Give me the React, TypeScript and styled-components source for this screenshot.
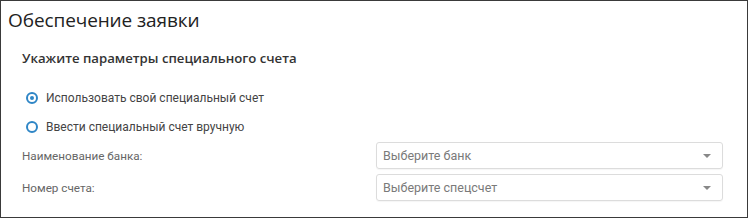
import React from "react";
import styled, { createGlobalStyle } from "styled-components";

const Global = createGlobalStyle`
  html, body { margin: 0; padding: 0; background: #fff; }
  body { font-family: "Open Sans", "Noto Sans", sans-serif; }
  * { box-sizing: border-box; }
`;

const Frame = styled.div`
  width: 748px;
  height: 218px;
  border: 1px solid #3a3a3a;
  background: #fff;
  overflow: hidden;
`;

const Title = styled.h1`
  margin: 0;
  padding: 6px 0 0 7px;
  font-size: 19px;
  line-height: 26px;
  font-weight: 500;
  color: #222;
  letter-spacing: -0.1px;
`;

const Body = styled.div`
  padding: 16px 0 0 21px;
  display: flex;
  flex-direction: column;
`;

const Subtitle = styled.h2`
  margin: 0 0 22px;
  font-size: 13.2px;
  line-height: 18px;
  font-weight: 600;
  color: #333;
`;

const RadioGroup = styled.div`
  display: flex;
  flex-direction: column;
  gap: 11px;
  padding-left: 4px;
  margin-bottom: 6px;
`;

const RadioRow = styled.label`
  display: flex;
  align-items: center;
  gap: 8px;
  font-family: Roboto, "Open Sans", sans-serif;
  font-size: 12px;
  line-height: 18px;
  color: #444;
`;

const RadioMark = styled.span<{ $checked?: boolean }>`
  width: 12px;
  height: 12px;
  border-radius: 50%;
  border: 2px solid #2f86c6;
  display: flex;
  align-items: center;
  justify-content: center;
  flex-shrink: 0;
  &::after {
    content: "";
    width: 4px;
    height: 4px;
    border-radius: 50%;
    background: ${(p) => (p.$checked ? "#2f86c6" : "transparent")};
  }
`;

const FieldGrid = styled.div`
  display: grid;
  grid-template-columns: 354px 347px;
  row-gap: 5px;
  align-items: center;
`;

const FieldLabel = styled.span`
  font-family: Roboto, "Open Sans", sans-serif;
  font-size: 11.7px;
  color: #666;
`;

const Select = styled.div`
  height: 27px;
  border: 1px solid #dcdcdc;
  border-radius: 3px;
  box-shadow: 0 1px 1px rgba(0, 0, 0, 0.04);
  display: flex;
  align-items: center;
  justify-content: space-between;
  padding: 0 11px 0 6px;
  font-family: Roboto, "Open Sans", sans-serif;
  font-size: 12.5px;
  color: #7a7a7a;
`;

const Caret = styled.span`
  width: 0;
  height: 0;
  border-left: 4px solid transparent;
  border-right: 4px solid transparent;
  border-top: 4px solid #888;
`;

export default function App() {
  return (
    <>
      <Global />
      <Frame>
        <Title>Обеспечение заявки</Title>
        <Body>
          <Subtitle>Укажите параметры специального счета</Subtitle>
          <RadioGroup>
            <RadioRow>
              <RadioMark $checked />
              Использовать свой специальный счет
            </RadioRow>
            <RadioRow>
              <RadioMark />
              Ввести специальный счет вручную
            </RadioRow>
          </RadioGroup>
          <FieldGrid>
            <FieldLabel>Наименование банка:</FieldLabel>
            <Select>
              Выберите банк
              <Caret />
            </Select>
            <FieldLabel>Номер счета:</FieldLabel>
            <Select>
              Выберите спецсчет
              <Caret />
            </Select>
          </FieldGrid>
        </Body>
      </Frame>
    </>
  );
}
